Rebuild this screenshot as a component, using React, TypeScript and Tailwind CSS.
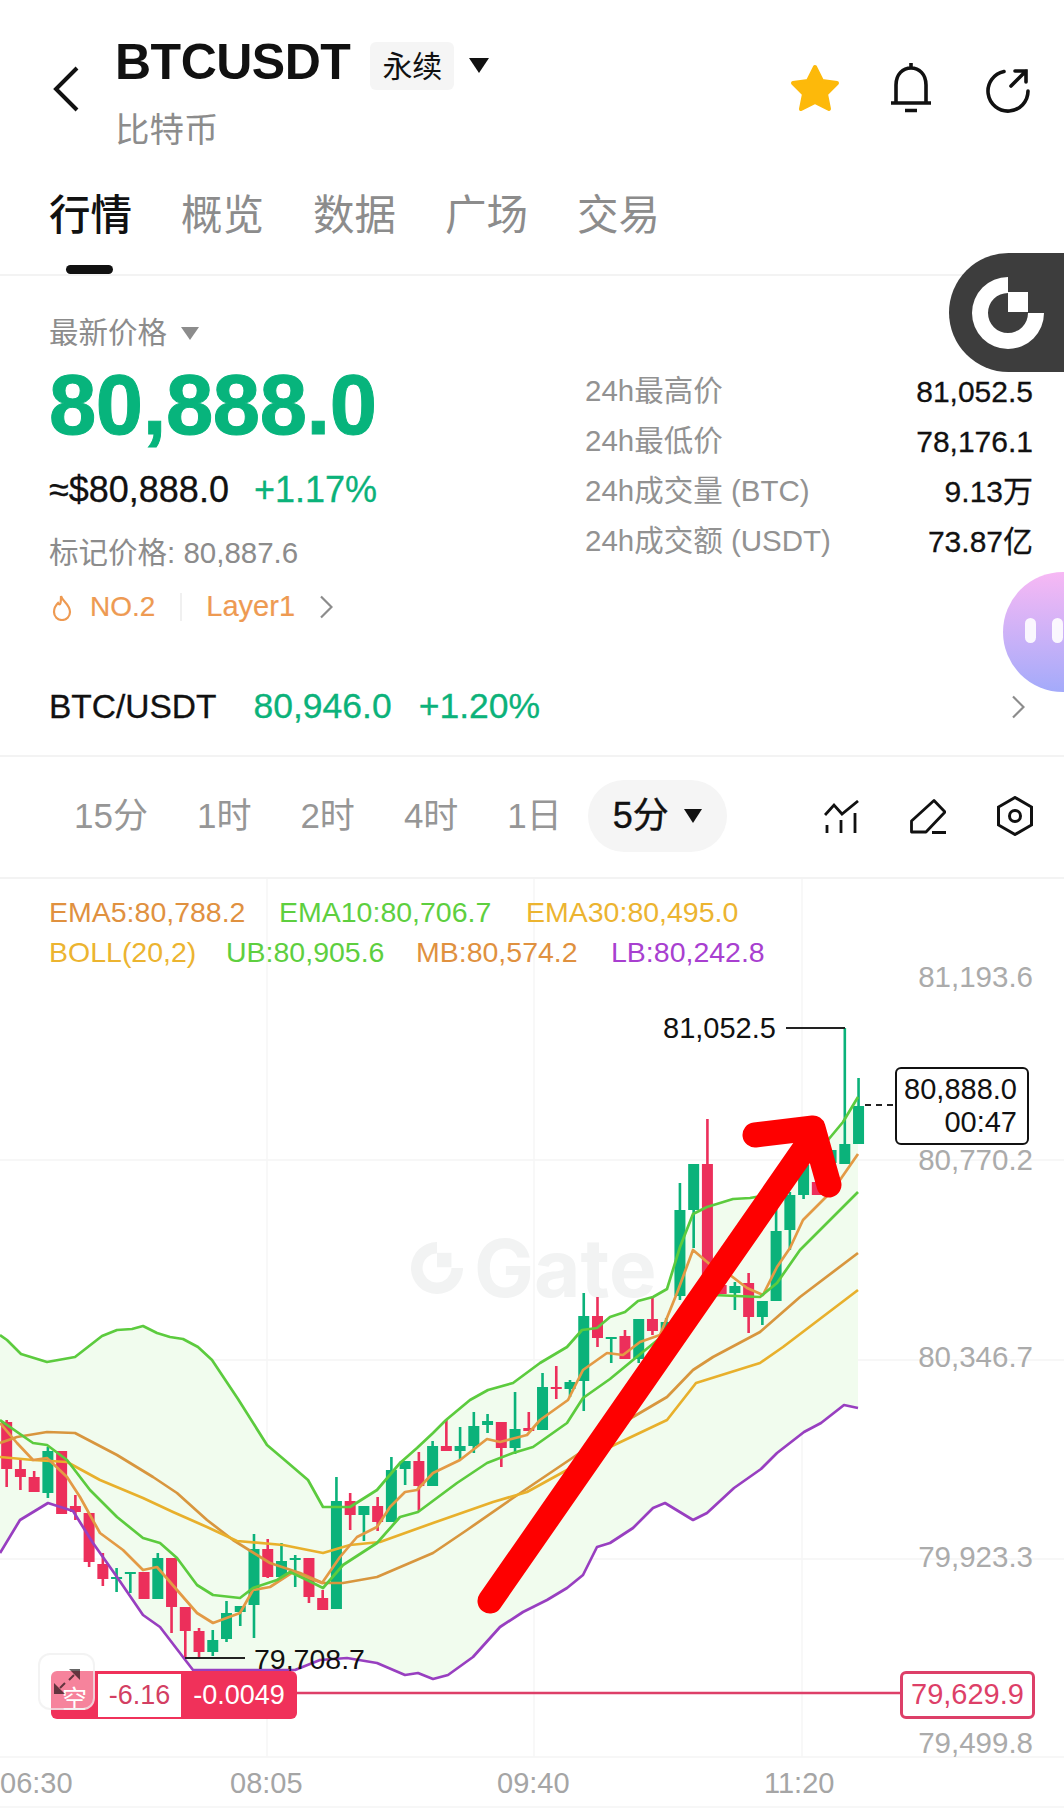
const GREEN = '#0bb27a';
const RED = '#ec2f5b';

// [index, colour, wickTop, wickBottom, bodyTop, bodyBottom], page coordinates
const candles: [number, string, number, number, number, number][] = [
  [0, 'r', 1420, 1487, 1422, 1469], [1, 'r', 1458, 1490, 1469, 1477], [2, 'r', 1471, 1492, 1477, 1492],
  [3, 'g', 1447, 1498, 1451, 1493], [4, 'r', 1451, 1514, 1451, 1514], [5, 'r', 1495, 1520, 1506, 1512],
  [6, 'r', 1513, 1567, 1513, 1562], [7, 'r', 1553, 1586, 1564, 1579], [8, 'g', 1568, 1592, 1577, 1579],
  [9, 'g', 1572, 1593, 1572, 1574], [10, 'r', 1572, 1599, 1572, 1599], [11, 'g', 1553, 1599, 1558, 1599],
  [12, 'r', 1558, 1633, 1558, 1607], [13, 'r', 1607, 1658, 1607, 1631], [14, 'r', 1628, 1658, 1631, 1652],
  [15, 'g', 1630, 1656, 1640, 1652], [16, 'g', 1601, 1642, 1613, 1639], [17, 'g', 1606, 1626, 1606, 1612],
  [18, 'g', 1534, 1638, 1549, 1605], [19, 'r', 1539, 1578, 1549, 1577], [20, 'g', 1543, 1577, 1561, 1577],
  [21, 'g', 1555, 1587, 1558, 1560], [22, 'r', 1558, 1603, 1558, 1597], [23, 'r', 1590, 1610, 1598, 1610],
  [24, 'g', 1477, 1609, 1501, 1609], [25, 'r', 1493, 1530, 1501, 1515], [26, 'g', 1506, 1541, 1506, 1515],
  [27, 'r', 1497, 1531, 1506, 1522], [28, 'g', 1457, 1522, 1470, 1522], [29, 'g', 1461, 1485, 1461, 1469],
  [30, 'r', 1452, 1511, 1461, 1486], [31, 'g', 1441, 1486, 1446, 1486], [32, 'r', 1420, 1451, 1446, 1451],
  [33, 'g', 1427, 1460, 1446, 1451], [34, 'g', 1412, 1453, 1426, 1446], [35, 'g', 1414, 1433, 1421, 1425],
  [36, 'r', 1422, 1467, 1422, 1448], [37, 'g', 1392, 1454, 1429, 1448], [38, 'r', 1412, 1431, 1428, 1431],
  [39, 'g', 1373, 1430, 1387, 1430], [40, 'r', 1366, 1399, 1387, 1389], [41, 'g', 1380, 1397, 1382, 1389],
  [42, 'g', 1293, 1411, 1316, 1381], [43, 'r', 1297, 1347, 1316, 1338], [44, 'g', 1337, 1363, 1337, 1339],
  [45, 'r', 1330, 1359, 1336, 1359], [46, 'g', 1319, 1363, 1319, 1359], [47, 'r', 1298, 1335, 1319, 1331],
  [48, 'g', 1318, 1335, 1322, 1330], [49, 'g', 1183, 1300, 1210, 1296], [50, 'g', 1164, 1248, 1164, 1210],
  [51, 'r', 1119, 1285, 1164, 1285], [52, 'r', 1285, 1294, 1285, 1294], [53, 'g', 1282, 1310, 1286, 1293],
  [54, 'r', 1273, 1333, 1283, 1317], [55, 'g', 1301, 1325, 1301, 1317], [56, 'g', 1203, 1301, 1231, 1301],
  [57, 'g', 1192, 1250, 1195, 1230], [58, 'g', 1165, 1199, 1165, 1195], [59, 'r', 1182, 1195, 1182, 1195],
  [60, 'g', 1150, 1163, 1150, 1163], [61, 'g', 1028, 1164, 1144, 1164], [62, 'g', 1078, 1144, 1106, 1144],
];

const ub =
  '0,1335 7,1340 21,1354 47,1362 75,1357 102,1336 117,1330 132,1329 143,1326 157,1333 170,1337 183,1339 198,1347 212,1360 238,1399 267,1445 287,1462 308,1480 323,1507 350,1507 377,1490 400,1463 417,1448 433,1433 446,1420 470,1400 488,1390 513,1383 540,1363 567,1347 582,1330 597,1328 610,1317 625,1312 638,1301 653,1297 667,1289 680,1247 693,1214 707,1207 733,1199 750,1198 767,1195 790,1180 810,1160 828,1140 843,1122 858,1097';
const lb =
  '0,1553 20,1520 48,1503 73,1511 93,1543 117,1577 143,1615 160,1627 183,1657 193,1670 295,1670 320,1660 347,1658 377,1663 405,1675 418,1673 433,1679 448,1675 473,1657 500,1627 523,1612 547,1600 567,1588 583,1575 597,1547 610,1543 633,1528 653,1508 665,1503 693,1520 707,1513 734,1488 761,1469 777,1453 804,1432 821,1423 844,1405 858,1408';
const ema10 =
  '0,1420 33,1443 47,1445 67,1460 90,1490 117,1517 143,1538 160,1543 177,1558 197,1585 213,1595 240,1598 253,1588 277,1580 290,1572 307,1580 323,1588 343,1565 377,1543 400,1517 418,1512 457,1483 487,1463 513,1453 533,1447 567,1423 583,1398 610,1379 633,1360 713,1295 760,1297 777,1283 800,1250 833,1217 858,1192';
const ema5 =
  '0,1423 17,1443 33,1460 47,1458 67,1477 80,1497 100,1533 123,1550 143,1570 157,1567 177,1590 197,1613 213,1623 240,1613 253,1590 270,1587 293,1572 322,1583 340,1557 357,1537 377,1527 390,1507 405,1492 417,1490 433,1473 460,1460 487,1439 500,1442 527,1435 540,1420 568,1400 583,1370 607,1353 623,1355 640,1342 660,1335 677,1293 693,1250 713,1267 730,1275 747,1288 763,1295 777,1267 790,1248 803,1220 833,1190 858,1154';
const mb =
  '0,1443 17,1437 47,1432 75,1433 117,1455 153,1477 177,1493 207,1520 233,1540 270,1563 300,1573 323,1583 343,1583 377,1577 433,1553 467,1530 513,1498 633,1417 667,1397 693,1370 713,1357 760,1332 800,1297 858,1253';
const ema30 =
  '0,1457 33,1460 67,1462 100,1480 143,1498 173,1512 207,1527 237,1541 283,1545 323,1553 350,1545 380,1542 433,1523 493,1502 527,1492 567,1470 610,1447 667,1420 696,1383 760,1363 783,1347 858,1290';

const fill = `${ub} ${lb.split(' ').reverse().join(' ')}`;

function GateLogo({ className }: { className: string }) {
  return (
    <svg viewBox="0 0 72 72" className={className} fill="currentColor">
      <path d="M36 0A36 36 0 1 0 72 36H56A20 20 0 1 1 36 16Z" />
      <rect x="36" y="15" width="20" height="20" />
    </svg>
  );
}

function Chevron({ className }: { className: string }) {
  return (
    <svg viewBox="0 0 14 24" className={className} fill="none" stroke="#8c8c8c" strokeWidth="2.2">
      <path d="M2 1.5L12.5 12L2 22.5" />
    </svg>
  );
}

function Chart() {
  return (
    <svg viewBox="0 879 1064 935" className="absolute inset-0 h-[935px] w-[1064px]">
      {[1160, 1360, 1559, 1757].map(y => (
        <line key={y} x1="0" x2="1064" y1={y} y2={y} stroke="#f4f4f4" strokeWidth="1.5" />
      ))}
      {[267, 534, 802].map(x => (
        <line key={x} x1={x} x2={x} y1="879" y2="1757" stroke="#f6f6f6" strokeWidth="1.5" />
      ))}
      <line x1="0" x2="1064" y1="1807" y2="1807" stroke="#f4f4f4" strokeWidth="1.5" />
      <polygon points={fill} fill="#f1fcee" />
      {candles.map(([i, c, wt, wb, bt, bb]) => {
        const x = 6.67 + i * 13.74;
        const color = c === 'g' ? GREEN : RED;
        return (
          <g key={i} fill={color}>
            <rect x={x - 1.3} y={wt} width="2.6" height={wb - wt} />
            <rect x={x - 5.5} y={bt} width="11" height={bb - bt} />
          </g>
        );
      })}
      <g fill="none" strokeWidth="2.7" strokeLinejoin="round">
        <polyline points={mb} stroke="#d8963e" />
        <polyline points={ema30} stroke="#e8b02c" />
        <polyline points={ema5} stroke="#e39a45" />
        <polyline points={ub} stroke="#5ccb3e" />
        <polyline points={ema10} stroke="#5ccb3e" />
        <polyline points={lb} stroke="#983fc0" />
      </g>
      {/* high and low markers */}
      <path d="M786 1028H845" stroke="#222" strokeWidth="2" fill="none" />
      <path d="M185 1658H245" stroke="#222" strokeWidth="2" fill="none" />
      <path d="M865 1105H895" stroke="#222" strokeWidth="2" strokeDasharray="6 5" fill="none" />
      <path d="M297 1693H902" stroke="#dd3f68" strokeWidth="2.5" fill="none" />
      {/* hand drawn arrow */}
      <g fill="none" stroke="#fe0000" strokeWidth="25" strokeLinecap="round" strokeLinejoin="round">
        <path d="M490 1601L812 1138" />
        <path d="M755 1135L813 1128L829 1185" />
      </g>
    </svg>
  );
}

function StatRow({ label, value }: { label: string; value: string }) {
  return (
    <div className="flex h-[50px] items-center justify-between">
      <span className="text-[29.5px] text-[#929292]">{label}</span>
      <span className="text-[30px] text-[#111] [-webkit-text-stroke:0.3px]">{value}</span>
    </div>
  );
}

export default function App() {
  return (
    <div className="relative h-[1814px] w-[1064px] overflow-hidden bg-white font-['Liberation_Sans','Noto_Sans_CJK_SC',sans-serif] text-[#111]">
      {/* header */}
      <header className="flex h-[170px] pl-[53px] pr-[33px] pt-[36px]">
        <svg viewBox="0 0 26 46" className="mt-[30px] h-[46px] w-[26px]" fill="none" stroke="#111" strokeWidth="4">
          <path d="M24 2L3 23L24 44" />
        </svg>
        <div className="ml-[36px]">
          <div className="flex h-[52px] items-center">
            <span className="text-[50px] font-bold leading-none tracking-[-0.5px]">BTCUSDT</span>
            <span className="ml-[20px] mt-[8px] flex h-[48px] w-[84px] items-center justify-center rounded-md bg-[#f5f5f5] text-[30px]">
              永续
            </span>
            <svg viewBox="0 0 20 15" className="ml-[15px] mt-[7px] h-[15px] w-[20px]" fill="#111">
              <path d="M0 0H20L10 15Z" />
            </svg>
          </div>
          <div className="mt-[20px] text-[34.5px] leading-[44px] text-[#8c8c8c]">比特币</div>
        </div>
        <div className="ml-auto mt-[27px] flex items-start">
          <svg viewBox="0 0 52 50" className="h-[50px] w-[52px]" fill="#fdb90a" stroke="#fdb90a" strokeWidth="4" strokeLinejoin="round">
            <path d="M26 4L33 18L48 20L37 31L40 46L26 39L12 46L15 31L4 20L19 18Z" />
          </svg>
          <svg viewBox="0 0 42 50" className="ml-[49px] h-[50px] w-[42px]" fill="none" stroke="#111" strokeWidth="3.6">
            <path d="M6 39V22C6 11 13 5 21 5C29 5 36 11 36 22V39M1 40H41M21 0V5M15 47.5H27" />
          </svg>
          <svg viewBox="0 0 46 46" className="ml-[53px] mt-[4px] h-[46px] w-[46px]" fill="none" stroke="#111" strokeWidth="3.6" strokeLinecap="round">
            <path d="M19 4.5A20 20 0 1 0 43 24M26 19L41 4M30 4H41V15" />
          </svg>
        </div>
      </header>

      {/* tabs */}
      <nav className="relative h-[106px] border-b-2 border-[#f3f3f3] pl-[49px]">
        <div className="flex h-[92px] items-center gap-[49px] text-[41.5px] leading-none text-[#8c8c8c]">
          <span className="font-medium text-[#111]">行情</span>
          <span>概览</span>
          <span>数据</span>
          <span>广场</span>
          <span>交易</span>
        </div>
        <div className="absolute bottom-0 left-[66px] h-[9px] w-[47px] rounded-full bg-[#111]" />
      </nav>

      {/* price */}
      <section className="flex h-[356px] pl-[49px] pr-[31px] pt-[39px]">
        <div className="w-[536px]">
          <div className="flex h-[36px] items-center text-[29.5px] text-[#8c8c8c]">
            最新价格
            <svg viewBox="0 0 18 13" className="ml-[14px] h-[13px] w-[18px]" fill="#8c8c8c">
              <path d="M0 0H18L9 13Z" />
            </svg>
          </div>
          <div className="flex h-[107px] items-center text-[85px] font-bold leading-none tracking-[-0.4px] text-[#07b47c] [-webkit-text-stroke:1px]">
            80,888.0
          </div>
          <div className="flex h-[64px] items-center text-[36px] leading-none">
            <span className="[-webkit-text-stroke:0.3px]">≈$80,888.0</span>
            <span className="ml-[25px] text-[#0bb27a] [-webkit-text-stroke:0.3px]">+1.17%</span>
          </div>
          <div className="flex h-[62px] items-center text-[29.5px] text-[#8c8c8c]">标记价格: 80,887.6</div>
          <div className="flex h-[46px] items-center text-[28px] text-[#ee9a52]">
            <svg viewBox="0 0 20 27" className="ml-[3px] h-[27px] w-[20px]" fill="none" stroke="#ee9a52" strokeWidth="2.2">
              <path d="M9 2C10 7 18 10 18 18A8 8 0 0 1 2 18C2 14 4 11 6 9C7 11 8 11 8.5 9C9 7 9 4 9 2Z" />
            </svg>
            <span className="ml-[18px] [-webkit-text-stroke:0.2px]">NO.2</span>
            <span className="ml-[25px] h-[28px] w-[2px] bg-[#f0f0f0]" />
            <span className="ml-[24px] text-[29px] [-webkit-text-stroke:0.2px]">Layer1</span>
            <Chevron className="ml-[24px] h-[24px] w-[14px]" />
          </div>
        </div>
        <div className="flex-1 pt-[51px]">
          <StatRow label="24h最高价" value="81,052.5" />
          <StatRow label="24h最低价" value="78,176.1" />
          <StatRow label="24h成交量 (BTC)" value="9.13万" />
          <StatRow label="24h成交额 (USDT)" value="73.87亿" />
        </div>
      </section>

      {/* spot pair */}
      <div className="flex h-[125px] items-center border-b-2 border-[#f3f3f3] pl-[49px] pr-[39px] pt-[27px]">
        <span className="text-[33.5px] [-webkit-text-stroke:0.3px]">BTC/USDT</span>
        <span className="ml-[37px] text-[35.5px] text-[#0bb27a] [-webkit-text-stroke:0.3px]">80,946.0</span>
        <span className="ml-[27px] text-[35.5px] text-[#0bb27a] [-webkit-text-stroke:0.3px]">+1.20%</span>
        <Chevron className="ml-auto h-[24px] w-[14px]" />
      </div>

      {/* toolbar */}
      <div className="flex h-[122px] items-center border-b-2 border-[#f3f3f3] pb-[2px] pl-[74px] pr-[31px] text-[35px] text-[#969696]">
        <div className="flex items-center gap-[49px]">
          <span>15分</span>
          <span>1时</span>
          <span>2时</span>
          <span>4时</span>
          <span>1日</span>
        </div>
        <div className="ml-[26px] flex h-[72px] w-[139px] items-center justify-center rounded-full bg-[#f5f5f5] text-[36px] text-[#111] [-webkit-text-stroke:0.4px]">
          5分
          <svg viewBox="0 0 18 14" className="ml-[15px] h-[14px] w-[18px]" fill="#111">
            <path d="M0 0H18L9 14Z" />
          </svg>
        </div>
        <div className="ml-auto flex items-center gap-[51px]">
          <svg viewBox="0 0 35 33" className="h-[33px] w-[35px]" fill="none" stroke="#111" strokeWidth="2.8">
            <path d="M1 15L10 5L18 14L34 1M3 25V33M17 20V33M31 13V33" />
          </svg>
          <svg viewBox="0 0 36 35" className="h-[35px] w-[36px]" fill="none" stroke="#111" strokeWidth="2.8" strokeLinejoin="round">
            <path d="M1.5 33V22L24 1.5L35 13L16 33H1.5ZM22 33.5H36" />
          </svg>
          <svg viewBox="0 0 36 40" className="h-[40px] w-[36px]" fill="none" stroke="#111" strokeWidth="3">
            <path d="M18 1.5L34.5 11V29L18 38.5L1.5 29V11Z" />
            <circle cx="18" cy="20" r="5.5" />
          </svg>
        </div>
      </div>

      {/* chart */}
      <div className="relative h-[935px]">
        <div className="absolute left-[411px] top-[362px] flex items-center text-[#f2f3f3]">
          <GateLogo className="h-[54px] w-[52px]" />
          <span className="ml-[11px] font-['Inter',sans-serif] text-[80px] font-bold leading-[54px]">Gate</span>
        </div>
        <Chart />

        <div className="absolute left-[49px] top-[13px] text-[28.5px] leading-[40px]">
          <div className="flex">
            <span className="w-[230px] text-[#e0913f]">EMA5:80,788.2</span>
            <span className="w-[247px] text-[#5ecf3f]">EMA10:80,706.7</span>
            <span className="text-[#ecb430]">EMA30:80,495.0</span>
          </div>
          <div className="flex">
            <span className="w-[177px] text-[#ecb430]">BOLL(20,2)</span>
            <span className="w-[190px] text-[#5ecf3f]">UB:80,905.6</span>
            <span className="w-[195px] text-[#e0913f]">MB:80,574.2</span>
            <span className="text-[#a83fd0]">LB:80,242.8</span>
          </div>
        </div>

        {/* price axis */}
        <div className="absolute right-[31px] top-[98px] -translate-y-1/2 text-[29.5px] leading-none text-[#ababab]">81,193.6</div>
        <div className="absolute right-[31px] top-[281px] -translate-y-1/2 text-[29.5px] leading-none text-[#ababab]">80,770.2</div>
        <div className="absolute right-[31px] top-[478px] -translate-y-1/2 text-[29.5px] leading-none text-[#ababab]">80,346.7</div>
        <div className="absolute right-[31px] top-[678px] -translate-y-1/2 text-[29.5px] leading-none text-[#ababab]">79,923.3</div>
        <div className="absolute right-[31px] top-[864px] -translate-y-1/2 text-[29.5px] leading-none text-[#ababab]">79,499.8</div>

        {/* time axis */}
        <div className="absolute left-0 top-[904px] -translate-y-1/2 text-[29px] leading-none text-[#a5a5a5]">06:30</div>
        <div className="absolute left-[230px] top-[904px] -translate-y-1/2 text-[29px] leading-none text-[#a5a5a5]">08:05</div>
        <div className="absolute left-[497px] top-[904px] -translate-y-1/2 text-[29px] leading-none text-[#a5a5a5]">09:40</div>
        <div className="absolute left-[764px] top-[904px] -translate-y-1/2 text-[29px] leading-none text-[#a5a5a5]">11:20</div>

        {/* chart labels */}
        <div className="absolute left-[663px] top-[149px] -translate-y-1/2 text-[29px] leading-none">81,052.5</div>
        <div className="absolute left-[254px] top-[780px] -translate-y-1/2 text-[28.5px] leading-none">79,708.7</div>

        <div className="absolute left-[895px] top-[188px] flex h-[78px] w-[134px] flex-col items-end justify-center rounded-md border-2 border-[#111] bg-white pr-[10px] text-[29px] leading-[33px]">
          <span>80,888.0</span>
          <span>00:47</span>
        </div>

        <div className="absolute left-[900px] top-[792px] flex h-[48px] w-[135px] items-center justify-center rounded-md border-[3px] border-[#dd3f68] bg-white text-[29px] text-[#dd3f68]">
          79,629.9
        </div>

        {/* position badge */}
        <div className="absolute left-[51px] top-[792px] flex h-[48px] w-[246px] items-center rounded-md bg-[#f0315a] text-[27px] text-white">
          <span className="flex w-[47px] justify-center pt-[10px] text-[25px]">空</span>
          <span className="flex h-[43px] w-[83px] items-center justify-center bg-white text-[#d33f63]">-6.16</span>
          <span className="flex flex-1 items-center justify-center">-0.0049</span>
        </div>
        <div className="absolute left-[38px] top-[774px] h-[57px] w-[57px] rounded-xl border-2 border-[#eeeeee]/70 bg-white/40">
          <svg viewBox="0 0 28 27" className="absolute left-[13px] top-[13px] h-[27px] w-[28px]" fill="#000" fillOpacity="0.6">
            <path d="M27 1V12L16 1Z" />
            <path d="M1 26V15L12 26Z" />
            <path d="M21 7L16 12M7 20L12 15" stroke="#000" strokeOpacity="0.6" strokeWidth="2" />
          </svg>
        </div>
      </div>

      {/* floating buttons */}
      <div className="absolute left-[949px] top-[253px] h-[119px] w-[115px] rounded-l-[60px] bg-[#3d3d3d] pl-[23px] pt-[24px] text-white">
        <GateLogo className="h-[72px] w-[72px]" />
      </div>
      <div className="absolute left-[1003px] top-[572px] flex h-[120px] w-[120px] gap-[16px] rounded-full bg-gradient-to-b from-[#f7b8f4] to-[#a3aafa] pl-[22px] pt-[46px]">
        <span className="h-[25px] w-[11px] rounded-full bg-white/90" />
        <span className="h-[25px] w-[11px] rounded-full bg-white/90" />
      </div>
    </div>
  );
}
